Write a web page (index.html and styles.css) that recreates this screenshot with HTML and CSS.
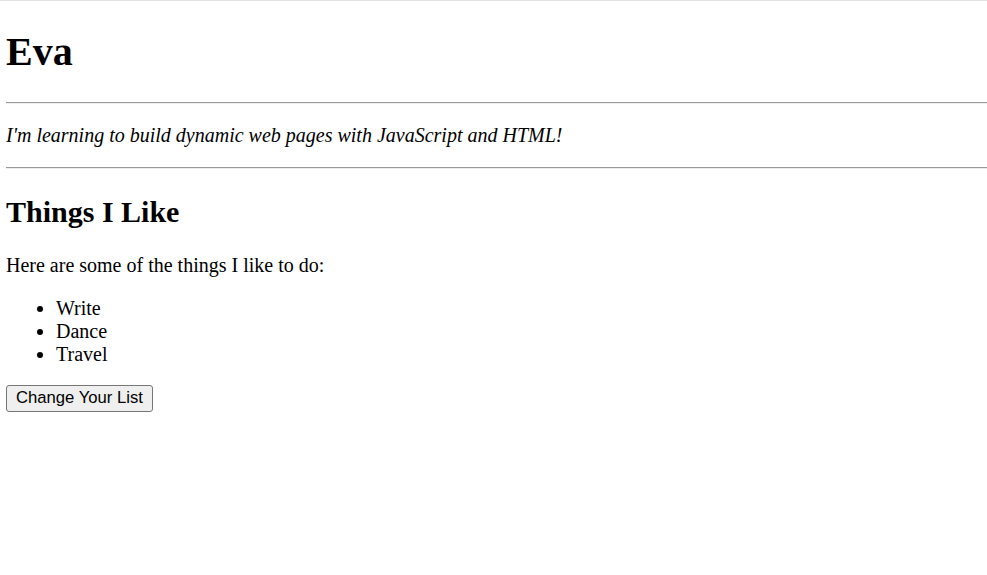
FILE: index.html
```html
<!DOCTYPE html>
<html>
<head>
<meta charset="utf-8">
<title>Eva</title>
<link rel="stylesheet" href="styles.css">
</head>
<body>
<h1 class="title">Eva</h1>
<hr class="rule">
<p class="tagline">I'm learning to build dynamic web pages with JavaScript and HTML!</p>
<hr class="rule">
<h2 class="heading">Things I Like</h2>
<p class="intro">Here are some of the things I like to do:</p>
<ul class="likes">
<li>Write</li>
<li>Dance</li>
<li>Travel</li>
</ul>
<button class="change-btn" type="button">Change Your List</button>
</body>
</html>
```
FILE: styles.css
```css
html {
  border-top: 1px solid #e3e3e3;
  background: #fff;
}
body {
  margin: 0 0 0 6px;
  font-family: "Liberation Serif", "Times New Roman", serif;
  font-size: 20px;
  color: #000;
}
.title {
  font-size: 40px;
  font-weight: bold;
  margin: 27.8px 0 26.8px;
  line-height: 46px;
}
.rule {
  margin: 10px 0;
  border: 0;
  border-top: 1px solid #9a9a9a;
  border-bottom: 1px solid #eeeeee;
  height: 0;
}
.tagline {
  font-style: italic;
  margin: 20px 0;
  line-height: 23px;
}
.heading {
  font-size: 30px;
  font-weight: bold;
  margin: 25px 0;
  line-height: 35px;
}
.intro {
  margin: 20px 0;
  line-height: 23px;
}
.likes {
  margin: 20px 0 19px;
  padding-left: 50px;
  line-height: 23px;
}
.change-btn {
  font-family: "Liberation Sans", Arial, sans-serif;
  font-size: 16.67px;
  padding: 1px 9px;
  height: 27px;
  border: 1px solid #767676;
  border-radius: 3px;
  background: #efefef;
  color: #000;
}
```
